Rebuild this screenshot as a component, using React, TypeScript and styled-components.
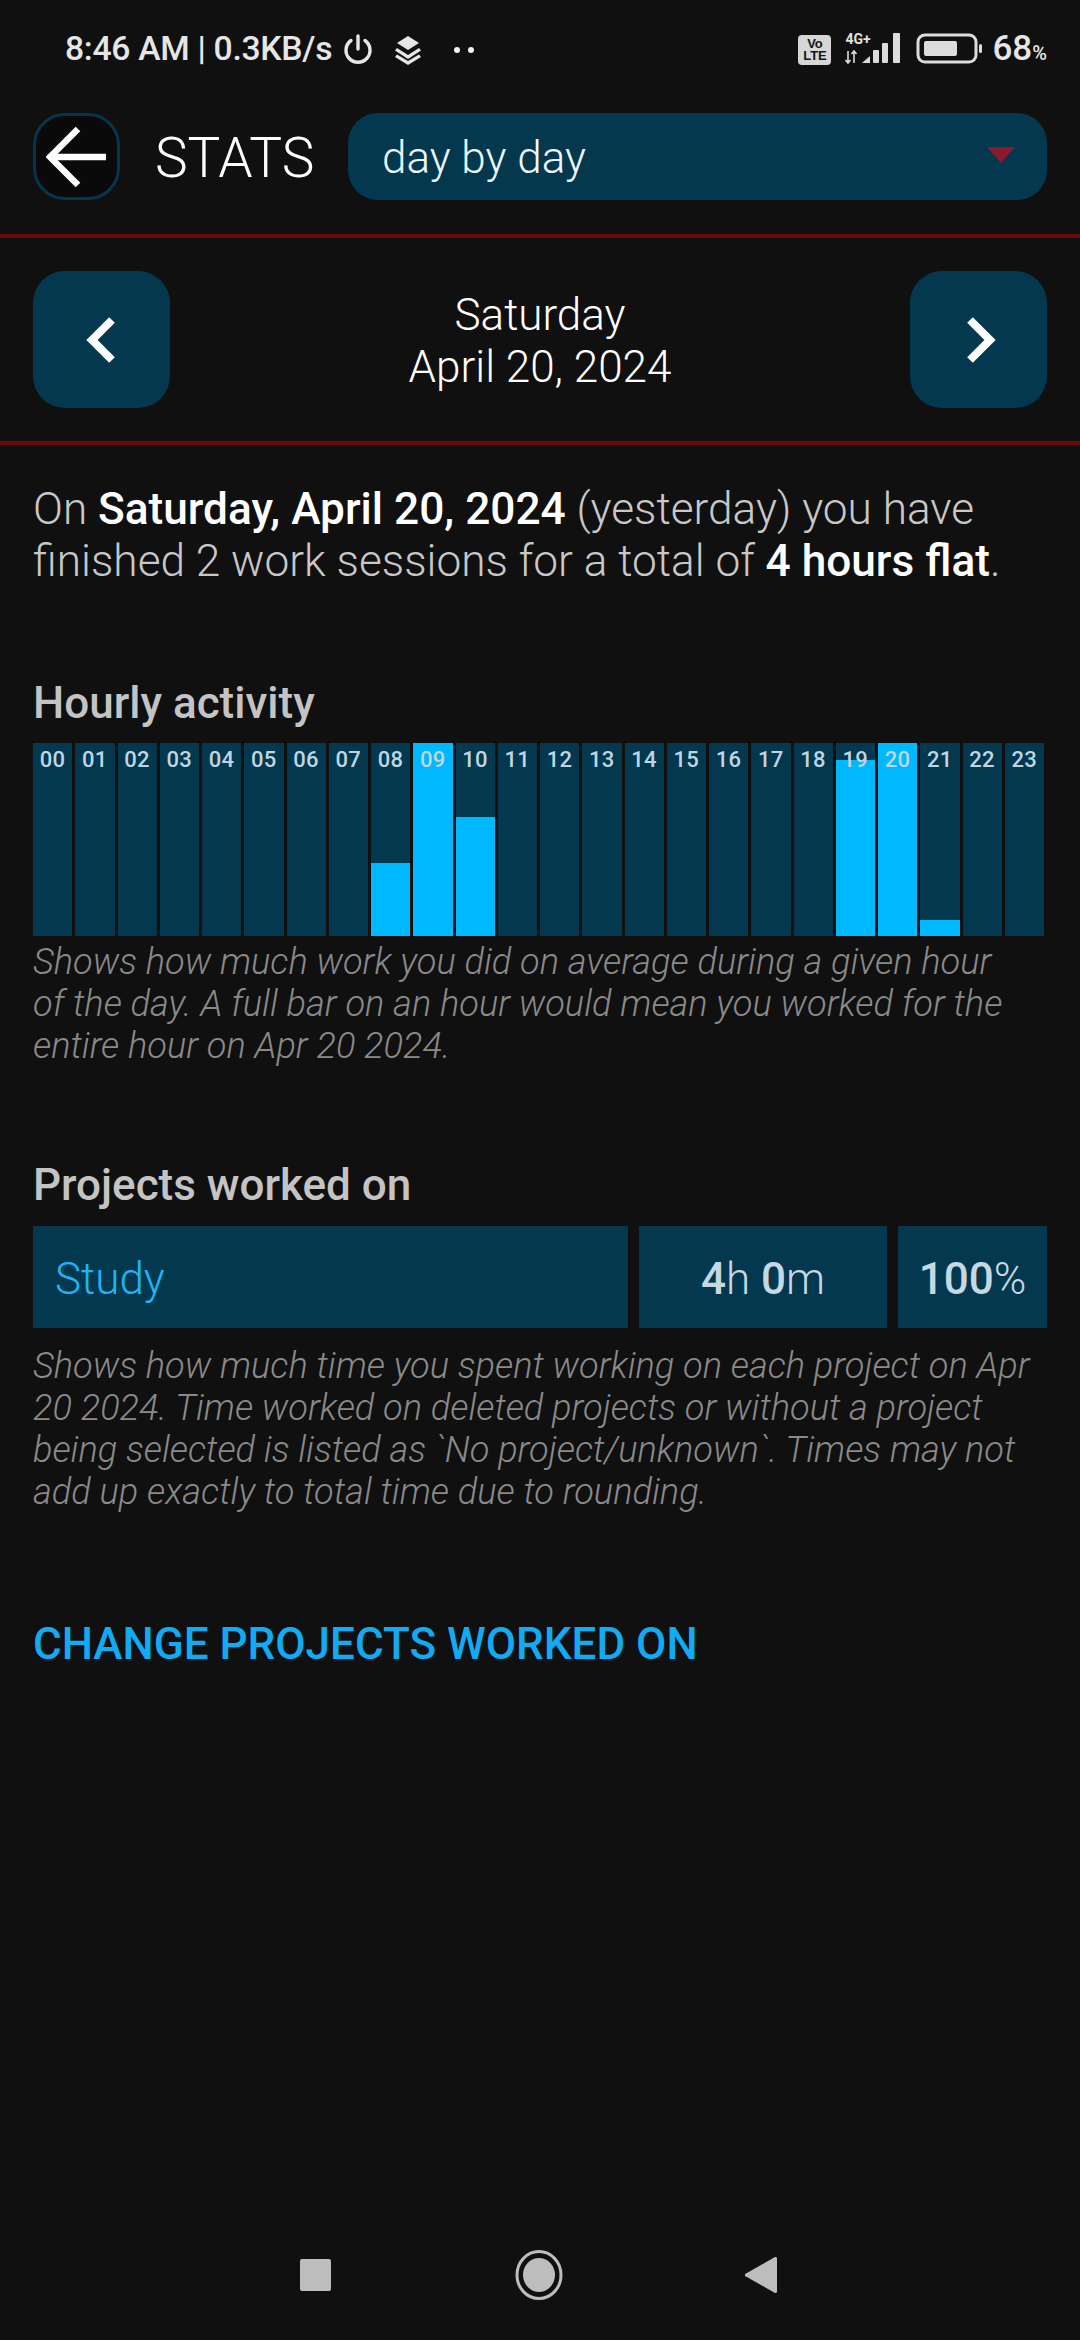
import React from 'react';
import styled, { createGlobalStyle } from 'styled-components';

const Global = createGlobalStyle`
  html, body { margin: 0; padding: 0; background: #101010; }
  body { font-family: Roboto, "Liberation Sans", sans-serif; }
  * { box-sizing: border-box; }
`;

const PANEL = '#03384f';
const BRIGHT = '#00b8ff';

const Page = styled.div`
  width: 1080px;
  height: 2340px;
  background: #101010;
  display: flex;
  flex-direction: column;
  overflow: hidden;
`;
const StatusBar = styled.div`
  height: 113px;
  padding: 29px 33px 0 65px;
  display: flex;
  align-items: flex-start;
  color: #e6e6e6;
`;
const StatusText = styled.span`
  font-size: 33.7px;
  font-weight: 500;
  line-height: 40px;
  white-space: nowrap;
  letter-spacing: -0.3px;
`;
const StatusIcon = styled.svg`
  display: block;
  flex: none;
  margin-top: ${(p: { $top?: number }) => p.$top ?? 6}px;
`;
const StatusLeft = styled.div`
  display: flex;
  gap: 10px;
  flex: 1;
`;
const StatusRight = styled.div`
  display: flex;
  align-items: flex-start;
  gap: 14px;
`;
const VoLte = styled.div`
  width: 33px;
  height: 30px;
  margin-top: 6px;
  border-radius: 4px;
  background: #d6d6d6;
  color: #151515;
  font-size: 13px;
  line-height: 12px;
  font-weight: 700;
  text-align: center;
  padding-top: 3px;
  font-family: "Liberation Sans", sans-serif;
`;
const Signal = styled.div`
  position: relative;
  width: 57px;
  height: 32px;
  margin-top: 4px;
`;
const Tiny = styled.span`
  position: absolute;
  left: 0;
  top: -1px;
  font-size: 14px;
  line-height: 14px;
  font-weight: 700;
  color: #e0e0e0;
`;
const Percent = styled.span`
  margin-left: -6px;
  font-size: 35px;
  font-weight: 500;
  line-height: 40px;
  font-family: Roboto, sans-serif;
  small { font-size: 20px; }
`;
const Header = styled.div`
  height: 87px;
  padding: 0 33px;
  display: flex;
  align-items: center;
`;
const BackButton = styled.div`
  width: 87px;
  height: 87px;
  border: 3px solid #06354c;
  border-radius: 32px;
  background: #0a0a0a;
  display: flex;
  align-items: center;
  justify-content: center;
  flex: none;
`;
const Title = styled.div`
  margin-left: 35px;
  padding-top: 3px;
  width: 193px;
  font-size: 55px;
  font-weight: 300;
  color: #fff;
  flex: none;
`;
const Select = styled.div`
  flex: 1;
  height: 87px;
  background: ${PANEL};
  border-radius: 30px;
  padding: 2px 34px 0;
  display: flex;
  align-items: center;
  justify-content: space-between;
  font-size: 44px;
  font-weight: 300;
  color: #eef6fa;
`;
const Caret = styled.svg`
  display: block;
  margin-right: -2px;
  margin-top: -6px;
`;
const Rule = styled.div`
  height: 4px;
  background: #6b0a0c;
  margin-top: ${(p: { $top: number }) => p.$top}px;
`;
const DateNav = styled.div`
  margin-top: 33px;
  padding: 0 33px;
  height: 137px;
  display: flex;
  align-items: center;
  justify-content: space-between;
`;
const NavButton = styled.div`
  width: 137px;
  height: 137px;
  background: ${PANEL};
  border-radius: 32px;
  display: flex;
  align-items: center;
  justify-content: center;
`;
const DateText = styled.div`
  padding-top: 2px;
  text-align: center;
  font-size: 44px;
  line-height: 52px;
  font-weight: 300;
  color: #fff;
`;
const Content = styled.div`
  padding: 0 33px;
  display: flex;
  flex-direction: column;
`;
const Summary = styled.p`
  margin: 38px 0 0;
  font-size: 44.2px;
  line-height: 52px;
  font-weight: 300;
  color: #c8c8c8;
  white-space: nowrap;
  b { font-weight: 500; color: #fff; }
`;
const Heading = styled.h2`
  margin: ${(p: { $top: number }) => p.$top}px 0 0;
  font-size: 44px;
  line-height: 52px;
  font-weight: 500;
  color: #c4c4c4;
`;
const Chart = styled.div`
  margin-top: 14px;
  width: 1011px;
  height: 193px;
  display: grid;
  grid-template-columns: repeat(24, 1fr);
  gap: 3px;
`;
const Bar = styled.div`
  position: relative;
  background: ${PANEL};
  display: flex;
  flex-direction: column;
  justify-content: flex-end;
`;
const Fill = styled.div`
  background: ${BRIGHT};
`;
const BarLabel = styled.span`
  position: absolute;
  top: 4px;
  left: 0;
  right: 0;
  text-align: center;
  font-size: 22px;
  line-height: 26px;
  font-weight: 500;
  letter-spacing: 0.4px;
  color: #bfd6e2;
`;
const Note = styled.p`
  margin: ${(p: { $top: number }) => p.$top}px 0 0;
  font-size: 36.2px;
  line-height: 42px;
  font-weight: 300;
  font-style: italic;
  color: #8a8a8a;
  white-space: nowrap;
`;
const ProjectRow = styled.div`
  margin-top: 15px;
  height: 102px;
  display: flex;
  gap: 11px;
`;
const Cell = styled.div<{ $w: number; $left?: boolean }>`
  width: ${(p) => p.$w}px;
  background: ${PANEL};
  display: flex;
  align-items: center;
  justify-content: ${(p) => (p.$left ? 'flex-start' : 'center')};
  padding: ${(p) => (p.$left ? '3px 22px 0' : '3px 0 0')};
  font-size: 44px;
  font-weight: 300;
  color: ${(p) => (p.$left ? '#1fb4f5' : '#c6d8e2')};
  b { font-weight: 500; }
`;
const ActionLink = styled.div`
  margin-top: 105px;
  font-size: 44px;
  line-height: 52px;
  font-weight: 500;
  color: #10abf2;
`;
const SoftNav = styled.div`
  margin-top: auto;
  margin-bottom: 40px;
  padding: 0 303px 0 300px;
  height: 50px;
  display: flex;
  align-items: center;
  justify-content: space-between;
`;

const fills: Record<number, number> = { 8: 0.377, 9: 1, 10: 0.616, 19: 0.912, 20: 1, 21: 0.083 };
const hours = Array.from({ length: 24 }, (_, i) => i);

export default function App() {
  return (
    <Page>
      <Global />
      <StatusBar>
        <StatusLeft>
          <StatusText>8:46 AM | 0.3KB/s</StatusText>
          <StatusIcon $top={4} width="32" height="32" viewBox="0 0 32 32" fill="none" stroke="#e6e6e6" strokeWidth="3.4" strokeLinecap="round">
            <path d="M16 3v13" />
            <path d="M9 7.5a12 12 0 1 0 14 0" />
          </StatusIcon>
          <StatusIcon $top={6} width="30" height="30" viewBox="0 0 30 30" fill="#e6e6e6" style={{ marginLeft: 9 }}>
            <path d="M15 1l11 7-11 7L4 8z" />
            <path d="M4 13l11 7 11-7 2 2.500L15 24 2 15.500z" />
            <path d="M4 19.500l11 6.500 11-6.500 2 2.500L15 30 2 22z" />
          </StatusIcon>
          <StatusIcon $top={14} width="24" height="14" viewBox="0 0 24 14" fill="#f2f2f2" style={{ marginLeft: 20 }}>
            <circle cx="4" cy="7" r="3" />
            <circle cx="18" cy="7" r="3" />
          </StatusIcon>
        </StatusLeft>
        <StatusRight>
          <VoLte>Vo<br />LTE</VoLte>
          <Signal>
            <Tiny>4G+</Tiny>
            <svg width="57" height="32" viewBox="0 0 57 32" fill="#dcdcdc" style={{ display: 'block' }}>
              <path d="M3 18v12M0.500 27L3 30l2.500-3M9 30V18M6.500 21L9 18l2.500 3" stroke="#dcdcdc" strokeWidth="1.600" fill="none" />
              <path d="M17 30l8-7v7z" />
              <rect x="28" y="17" width="6" height="13" rx="1" />
              <rect x="37" y="10" width="6" height="20" rx="1" />
              <rect x="48" y="0" width="7" height="30" rx="1" />
            </svg>
          </Signal>
          <StatusIcon $top={4} width="68" height="32" viewBox="0 0 68 32" fill="none">
            <rect x="2" y="2" width="58" height="27" rx="7" stroke="#dcdcdc" strokeWidth="3" />
            <rect x="8" y="8" width="33" height="15" rx="2" fill="#dcdcdc" />
            <rect x="63" y="11" width="3" height="9" rx="1.500" fill="#dcdcdc" />
          </StatusIcon>
          <Percent>68<small>%</small></Percent>
        </StatusRight>
      </StatusBar>

      <Header>
        <BackButton>
          <svg width="62" height="62" viewBox="0 0 62 62" fill="none" stroke="#fff" strokeWidth="6.500">
            <path d="M60 31H6" />
            <path d="M32 3L4 31l28 28" />
          </svg>
        </BackButton>
        <Title>STATS</Title>
        <Select>
          day by day
          <Caret width="28" height="16" viewBox="0 0 28 16">
            <path d="M0 0h28L14 16z" fill="#8a1a2e" />
          </Caret>
        </Select>
      </Header>
      <Rule $top={34} />

      <DateNav>
        <NavButton>
          <svg width="36" height="48" viewBox="0 0 36 48" fill="none" stroke="#fff" strokeWidth="8">
            <path d="M28 4L8 24l20 20" />
          </svg>
        </NavButton>
        <DateText>Saturday<br />April 20, 2024</DateText>
        <NavButton>
          <svg width="36" height="48" viewBox="0 0 36 48" fill="none" stroke="#fff" strokeWidth="8">
            <path d="M10 4l20 20-20 20" />
          </svg>
        </NavButton>
      </DateNav>
      <Rule $top={33} />

      <Content>
        <Summary>
          On <b>Saturday, April 20, 2024</b> (yesterday) you have<br />
          finished 2 work sessions for a total of <b>4 hours flat</b>.
        </Summary>
        <Heading $top={90}>Hourly activity</Heading>
        <Chart>
          {hours.map((h) => (
            <Bar key={h}>
              {fills[h] ? <Fill style={{ height: `${fills[h] * 100}%` }} /> : null}
              <BarLabel>{String(h).padStart(2, '0')}</BarLabel>
            </Bar>
          ))}
        </Chart>
        <Note $top={5}>
          Shows how much work you did on average during a given hour<br />
          of the day. A full bar on an hour would mean you worked for the<br />
          entire hour on Apr 20 2024.
        </Note>
        <Heading $top={92}>Projects worked on</Heading>
        <ProjectRow>
          <Cell $w={595} $left>Study</Cell>
          <Cell $w={248}><span><b>4</b>h <b>0</b>m</span></Cell>
          <Cell $w={149}><span><b>100</b>%</span></Cell>
        </ProjectRow>
        <Note $top={17}>
          Shows how much time you spent working on each project on Apr<br />
          20 2024. Time worked on deleted projects or without a project<br />
          being selected is listed as `No project/unknown`. Times may not<br />
          add up exactly to total time due to rounding.
        </Note>
        <ActionLink>CHANGE PROJECTS WORKED ON</ActionLink>
      </Content>

      <SoftNav>
        <svg width="32" height="34" viewBox="0 0 32 34"><rect x="0" y="1" width="31" height="32" rx="2" fill="#bdbdbd" /></svg>
        <svg width="48" height="50" viewBox="0 0 48 50">
          <ellipse cx="24" cy="25" rx="22" ry="23.500" fill="none" stroke="#bdbdbd" strokeWidth="3" />
          <ellipse cx="24" cy="25" rx="16" ry="17" fill="#bdbdbd" />
        </svg>
        <svg width="32" height="38" viewBox="0 0 32 38"><path d="M30 1a1.500 1.500 0 0 1 2 1.500v33a1.500 1.500 0 0 1-2 1.500L1 20.500a1.500 1.500 0 0 1 0-3z" fill="#bdbdbd" /></svg>
      </SoftNav>
    </Page>
  );
}
